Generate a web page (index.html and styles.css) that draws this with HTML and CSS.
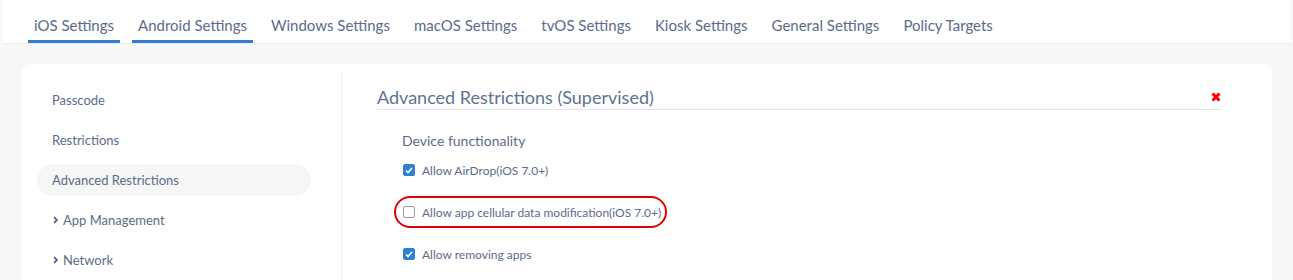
FILE: index.html
```html
<!DOCTYPE html>
<html>

<head>
    <title>Policy Settings</title>
    <link rel="stylesheet" href="styles.css">
</head>

<body>
    <div class="tabs">
        <a href="#" class="tab active">iOS Settings</a>
        <a href="#" class="tab active">Android Settings</a>
        <a href="#" class="tab">Windows Settings</a>
        <a href="#" class="tab">macOS Settings</a>
        <a href="#" class="tab">tvOS Settings</a>
        <a href="#" class="tab">Kiosk Settings</a>
        <a href="#" class="tab">General Settings</a>
        <a href="#" class="tab">Policy Targets</a>
    </div>

    <div class="card">
        <ul class="side">
            <li><a href="#">Passcode</a></li>
            <li><a href="#">Restrictions</a></li>
            <li class="current"><a href="#">Advanced Restrictions</a></li>
            <li><a href="#"><svg class="chev" width="5" height="8" viewBox="0 0 5 8"><path d="M1 1l3 3-3 3" fill="none" stroke="#5b6b8b" stroke-width="1.8"/></svg>App Management</a></li>
            <li><a href="#"><svg class="chev" width="5" height="8" viewBox="0 0 5 8"><path d="M1 1l3 3-3 3" fill="none" stroke="#5b6b8b" stroke-width="1.8"/></svg>Network</a></li>
        </ul>

        <div class="main">
            <div class="head">
                <h2>Advanced Restrictions (Supervised)</h2>
                <svg class="close" width="10" height="10" viewBox="0 0 10 10"><path d="M1.5 1.5l7 7M8.5 1.5l-7 7" stroke="#ff0000" stroke-width="3"/></svg>
            </div>

            <div class="group">
                <h3>Device functionality</h3>
                <label class="row">
                    <span class="box checked"><svg width="8" height="7" viewBox="0 0 8 7"><path d="M1 3.5l2 2 4-4.5" fill="none" stroke="#fff" stroke-width="1.6"/></svg></span>
                    Allow AirDrop(iOS 7.0+)
                </label>
                <label class="row marked">
                    <span class="box"></span>
                    Allow app cellular data modification(iOS 7.0+)
                </label>
                <label class="row">
                    <span class="box checked"><svg width="8" height="7" viewBox="0 0 8 7"><path d="M1 3.5l2 2 4-4.5" fill="none" stroke="#fff" stroke-width="1.6"/></svg></span>
                    Allow removing apps
                </label>
            </div>
        </div>
    </div>
</body>

</html>
```

FILE: styles.css
```css
* {
    margin: 0;
    padding: 0;
    box-sizing: border-box;
}

body {
    background-color: #f7f7f7;
    font-family: Lato, "Liberation Sans", sans-serif;
    color: #5b6b8b;
    padding: 0 2px;
    height: 280px;
    overflow: hidden;
}

a {
    text-decoration: none;
    color: inherit;
}

li {
    list-style-type: none;
}

.tabs {
    display: flex;
    gap: 12px;
    height: 44px;
    padding-left: 26px;
    background-color: #fff;
    border-bottom: 1px solid #ececec;
}

.tab {
    font-size: 15px;
    line-height: 20px;
    padding: 15px 6px 5px;
    border-bottom: 3px solid transparent;
}

.tab.active {
    border-bottom-color: #2f80d1;
}

.card {
    display: flex;
    margin: 20px 19px 0 20px;
    min-height: 300px;
    background-color: #fff;
    border-radius: 8px;
}

.side {
    width: 320px;
    margin-top: 10px;
    padding: 10px 30px 0 15px;
    border-right: 1px solid #eeeeee;
}

.side li {
    margin-bottom: 8px;
}

.side a {
    display: flex;
    align-items: center;
    height: 32px;
    padding-left: 15px;
    font-size: 13px;
    border-radius: 16px;
}

.side .current a {
    background-color: #f6f6f6;
}

.chev {
    margin: 0 5px 0 1px;
}

.main {
    flex: 1;
    padding: 21px 50px 0 35px;
}

.head {
    display: flex;
    justify-content: space-between;
    align-items: center;
    border-bottom: 1px solid #e3e3e3;
}

.head h2 {
    font-size: 18px;
    line-height: 24px;
    font-weight: normal;
    color: #5e7393;
}

.close {
    margin-right: 1px;
}

.group {
    padding-left: 25px;
}

.group h3 {
    margin-top: 21px;
    font-size: 14px;
    line-height: 20px;
    font-weight: normal;
}

.row {
    display: flex;
    align-items: center;
    gap: 7px;
    width: max-content;
    height: 32px;
    margin: 3px 0 10px -8px;
    padding: 0 4px 0 7px;
    border: 2px solid transparent;
    border-radius: 16px;
    font-size: 12px;
}

.row.marked {
    border-color: #e40000;
}

.box {
    display: flex;
    align-items: center;
    justify-content: center;
    width: 12px;
    height: 12px;
    border: 1px solid #9b9b9b;
    border-radius: 2px;
    background-color: #fff;
}

.box.checked {
    border-color: #2f7fd6;
    background-color: #2f7fd6;
}
```
